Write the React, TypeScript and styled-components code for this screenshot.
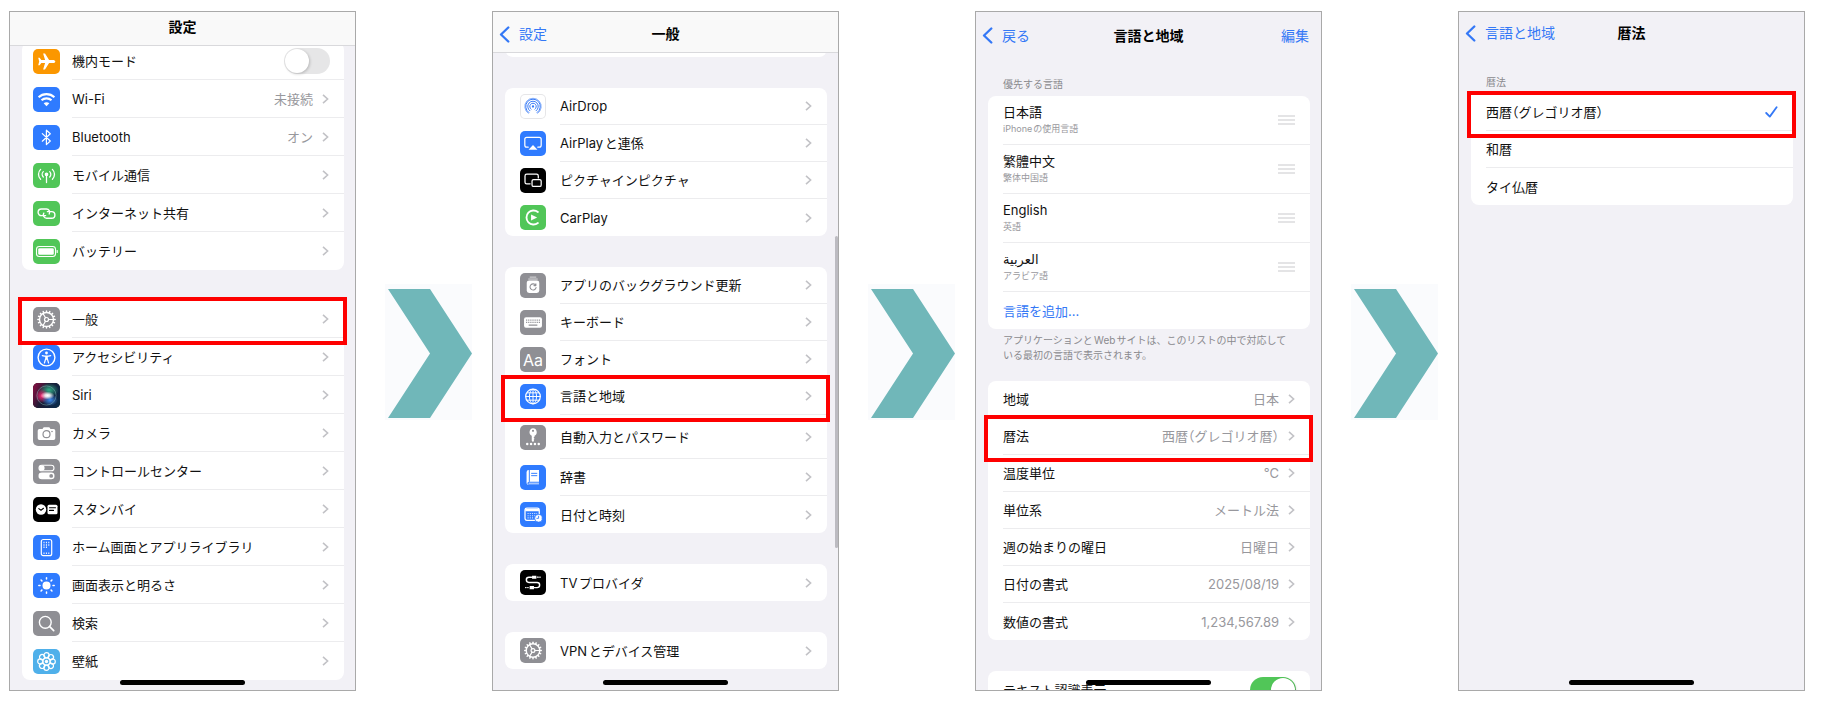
import React, { useState } from "react";
import styled, { createGlobalStyle, css } from "styled-components";

const BLUE = "#3478f6";
const ICON_BLUE = "#2f7bff";
const GREEN = "#51c658";
const GRAY = "#8f8f94";

const GlobalStyle = createGlobalStyle`
  *, *::before, *::after { box-sizing: border-box; }
  body {
    margin: 0;
    background: #fff;
    color: #111;
    font-family: Inter, "Noto Sans CJK JP", "DejaVu Sans", sans-serif;
    font-size: 13px;
    line-height: 18px;
    text-autospace: normal;
  }
`;

/* ---------- page ---------- */

const Guide = styled.main`
  display: grid;
  grid-template-columns:
    minmax(0, 347fr) minmax(0, 136fr) minmax(0, 347fr) minmax(0, 136fr)
    minmax(0, 347fr) minmax(0, 136fr) minmax(0, 347fr);
  align-items: center;
  padding: 11px 18px 12px 9px;
`;

const Screen = styled.section`
  position: relative;
  display: flex;
  flex-direction: column;
  aspect-ratio: 347 / 680;
  overflow: hidden;
  border: 1px solid #a9a9a9;
  background: #f2f1f6;
`;

const StepArrow = styled.svg`
  display: block;
  width: 64%;
  height: auto;
  margin: 2px 0 0 21%;
`;

const HomeIndicator = styled.div`
  position: absolute;
  left: 32%;
  bottom: 5px;
  z-index: 3;
  width: 36%;
  height: 5px;
  border-radius: 3px;
  background: #000;
`;

const ScrollThumb = styled.div`
  position: absolute;
  top: 33%;
  right: 0;
  width: 3px;
  height: 46%;
  border-radius: 2px;
  background: #bcbbc1;
`;

/* ---------- header ---------- */

const Bar = styled.header<{ $height: number; $raised?: boolean; $top?: number; $bottom?: number }>`
  position: relative;
  z-index: 2;
  flex: none;
  display: grid;
  grid-template-columns: 1fr auto 1fr;
  align-items: center;
  height: ${(p) => p.$height}px;
  padding: ${(p) => p.$top ?? 0}px 6px ${(p) => p.$bottom ?? 0}px;
  ${(p) =>
    p.$raised &&
    css`
      border-bottom: 1px solid #d9d9dc;
      background: #f9f9f9;
    `}
`;

const Title = styled.h2`
  grid-column: 2;
  margin: 0;
  font-size: 14px;
  font-weight: 700;
  line-height: 20px;
  color: #000;
`;

const BackLink = styled.a`
  grid-column: 1;
  justify-self: start;
  display: flex;
  align-items: center;
  gap: 9px;
  color: ${BLUE};
  font-size: 14px;
  line-height: 20px;
  text-decoration: none;
`;

const EditButton = styled.button`
  grid-column: 3;
  justify-self: end;
  padding: 0 6px 0 0;
  border: 0;
  background: none;
  color: ${BLUE};
  font: inherit;
  font-size: 14px;
  line-height: 20px;
`;

/* ---------- lists ---------- */

const Stack = styled.div<{ $gap: number; $top?: number }>`
  display: flex;
  flex-direction: column;
  gap: ${(p) => p.$gap}px;
  margin-top: ${(p) => p.$top ?? 0}px;
  padding: 0 11px 0 12px;
`;

const Group = styled.ul<{ $squareTop?: boolean; $pad?: number; $gap?: number }>`
  --pad: ${(p) => p.$pad ?? 15}px;
  --gap: ${(p) => p.$gap ?? 14}px;
  margin: 0;
  padding: 0;
  list-style: none;
  border-radius: ${(p) => (p.$squareTop ? "0 0 8px 8px" : "8px")};
  background: #fff;
`;

const GroupEnd = styled.div`
  height: 12px;
  border-radius: 0 0 8px 8px;
  background: #fff;
`;

const Item = styled.li<{ $height: number; $marked?: boolean }>`
  position: relative;
  height: ${(p) => p.$height}px;
  font-feature-settings: "halt";
  ${(p) =>
    p.$marked &&
    css`
      z-index: 1;
      &::after {
        content: "";
        position: absolute;
        inset: -3px -3px -7px -4px;
        border: 4px solid #fe0000;
        pointer-events: none;
      }
    `}
`;

const rowLayout = css`
  display: flex;
  align-items: center;
  gap: var(--gap);
  height: 100%;
  padding-left: var(--pad);
  color: inherit;
  text-decoration: none;
`;

const RowLink = styled.a`${rowLayout}`;
const RowLabel = styled.label`${rowLayout}`;
const RowBox = styled.div`${rowLayout}`;

const RowBody = styled.span`
  flex: 1;
  display: flex;
  align-items: center;
  gap: 9px;
  height: 100%;
  padding-right: 15px;
  border-bottom: 1px solid #ececee;
  white-space: nowrap;
  li:last-child & {
    border-bottom: 0;
  }
`;

const Name = styled.span`
  flex: 1;
`;

const Value = styled.span`
  color: #98989d;
`;

const Tile = styled.span<{ $bg: string; $width: number; $outlined?: boolean }>`
  flex: none;
  display: flex;
  align-items: center;
  justify-content: center;
  width: ${(p) => p.$width}px;
  height: 25px;
  overflow: hidden;
  border-radius: 5px;
  background: ${(p) => p.$bg};
  color: #fff;
  font-size: 16px;
  ${(p) => p.$outlined && "box-shadow: inset 0 0 0 1px #e6e6e8;"}
`;

const SectionLabel = styled.h3<{ $top: number }>`
  margin: ${(p) => p.$top}px 27px 4px;
  color: #8a8a8e;
  font-size: 10px;
  font-weight: 400;
  line-height: 15px;
`;

const Note = styled.p`
  margin: 4px 27px 18px;
  padding-right: 4px;
  color: #8a8a8e;
  font-size: 10px;
  line-height: 15px;
`;

const LanguageText = styled.span`
  flex: 1;
  display: flex;
  flex-direction: column;
`;

const LanguageNote = styled.small`
  color: #98989d;
  font-size: 9px;
  line-height: 16px;
`;

const HandleButton = styled.button`
  display: flex;
  padding: 0;
  border: 0;
  background: none;
`;

const AddButton = styled.button`
  width: 100%;
  height: 100%;
  padding: 0 15px;
  border: 0;
  background: none;
  color: ${BLUE};
  font: inherit;
  text-align: left;
`;

const Switch = styled.input`
  appearance: none;
  flex: none;
  width: 46px;
  height: 26px;
  margin: 0 -1px 0 0;
  padding: 1px;
  border-radius: 13px;
  background: #e6e6e7;
  &::before {
    content: "";
    display: block;
    width: 24px;
    height: 24px;
    border-radius: 50%;
    background: #fff;
    box-shadow: 1px 1px 3px rgba(0, 0, 0, 0.2);
  }
  &:checked {
    background: ${GREEN};
  }
  &:checked::before {
    margin-left: auto;
  }
`;

const HiddenRadio = styled.input`
  appearance: none;
  width: 0;
  height: 0;
  margin: 0;
  & + svg {
    visibility: hidden;
  }
  &:checked + svg {
    visibility: visible;
  }
`;

/* ---------- glyphs ---------- */

const Chevron = () => (
  <svg width="7" height="10" viewBox="0 0 7 10" fill="none" stroke="#c2c2c6" strokeWidth="1.6" aria-hidden="true">
    <path d="M1 0.8 5.6 5 1 9.2" />
  </svg>
);

const BackChevron = () => (
  <svg width="11" height="17" viewBox="0 0 11 17" fill="none" stroke={BLUE} strokeWidth="2.3" strokeLinecap="round" strokeLinejoin="round" aria-hidden="true">
    <path d="M9.3 1.5 2 8.5 9.3 15.5" />
  </svg>
);

const Check = () => (
  <svg width="13" height="12" viewBox="0 0 13 12" fill="none" stroke={BLUE} strokeWidth="1.8" strokeLinecap="round" strokeLinejoin="round" aria-hidden="true">
    <path d="M1.2 7 4.8 10.6 11.6 1.2" />
  </svg>
);

const DragLines = () => (
  <svg width="17" height="10" viewBox="0 0 17 10" stroke="#c9c9cc" strokeWidth="1" aria-hidden="true">
    <path d="M0 1h17M0 5h17M0 9h17" />
  </svg>
);

const Arrow = () => (
  <StepArrow viewBox="0 0 87 136" aria-hidden="true">
    <rect width="87" height="136" fill="#fafbfd" />
    <path d="M3 5h42l42 64.5L45 134H3l42-64.5z" fill="#70b7b9" />
  </StepArrow>
);

const Glyph = ({ children }: { children: React.ReactNode }) => (
  <svg width="27" height="25" viewBox="0 0 27 25" fill="none" stroke="#fff" strokeWidth="1.3" strokeLinecap="round" strokeLinejoin="round" aria-hidden="true">
    {children}
  </svg>
);

const around = (n: number) => Array.from({ length: n }, (_, i) => (360 / n) * i);

const gear = (
  <Glyph>
    <circle cx="13.5" cy="12.5" r="7" strokeWidth="1.4" />
    {around(16).map((a) => (
      <path key={a} d="M13.5 3.9v1.2" strokeWidth="1.5" transform={`rotate(${a} 13.5 12.5)`} />
    ))}
    <circle cx="13.5" cy="12.5" r="2" strokeWidth="1.2" />
    <path d="M15.5 12.5h5M12.5 10.8 10 6.5M12.5 14.2 10 18.5" strokeWidth="1.2" />
  </Glyph>
);

const glyphs: Record<string, React.ReactNode> = {
  gear,
  plane: (
    <Glyph>
      <path
        d="M22.3 12.5c0-1-1.3-1.5-2.6-1.5h-3.6L12 4.5h-1.9l2 6.5H8.3L6.6 8.8H5.2l1 3.7-1 3.7h1.4L8.3 14h3.8l-2 6.5H12l4.1-6.5h3.6c1.3 0 2.6-.5 2.6-1.5z"
        fill="#fff" stroke="none"
      />
    </Glyph>
  ),
  wifi: (
    <Glyph>
      <path d="M5.6 10.2c4.4-4.1 11.4-4.1 15.8 0M8.5 13.3c2.8-2.6 7.2-2.6 10 0" strokeWidth="2.1" strokeLinecap="butt" />
      <path d="M13.5 19.3l-2.8-3c1.5-1.4 4.1-1.4 5.6 0z" fill="#fff" stroke="none" />
    </Glyph>
  ),
  bluetooth: (
    <Glyph>
      <path d="M9.3 8.6l8 7.4-3.9 3.6V5.2l3.9 3.6-8 7.4" strokeWidth="1.2" />
    </Glyph>
  ),
  antenna: (
    <Glyph>
      <circle cx="13.5" cy="11.3" r="1.2" fill="#fff" />
      <path d="M13.5 12.5v7M10.3 14c-1.5-1.5-1.5-3.9 0-5.4M16.7 14c1.5-1.5 1.5-3.9 0-5.4M7.6 16.2c-2.8-2.8-2.8-7 0-9.8M19.4 16.2c2.8-2.8 2.8-7 0-9.8" />
    </Glyph>
  ),
  link: (
    <Glyph>
      <path d="M12.6 14.6h-4.2a3.3 3.3 0 0 1 0-6.6h5a3.3 3.3 0 0 1 2.8 5M14.4 10.6h4.2a3.3 3.3 0 0 1 0 6.6h-5a3.3 3.3 0 0 1-2.8-5" strokeWidth="1.4" />
    </Glyph>
  ),
  battery: (
    <Glyph>
      <rect x="3.5" y="7.5" width="19" height="10" rx="2.8" strokeWidth="1.1" />
      <rect x="5.2" y="9.2" width="15.6" height="6.6" rx="1.4" fill="#fff" stroke="none" />
      <path d="M24.2 11.5v2" strokeWidth="1.2" />
    </Glyph>
  ),
  accessibility: (
    <Glyph>
      <circle cx="13.5" cy="12.5" r="8.4" strokeWidth="1.4" />
      <circle cx="13.5" cy="8" r="1.4" fill="#fff" stroke="none" />
      <path d="M9.3 10.6c2.8.8 5.6.8 8.4 0M13.5 11.2v3M11.4 18l1.3-4.2h1.6l1.3 4.2M12.8 11.3v3M14.2 11.3v3" strokeWidth="1.2" />
    </Glyph>
  ),
  siri: (
    <svg width="27" height="25" viewBox="0 0 27 25" aria-hidden="true">
      <defs>
        <linearGradient id="siriBase" x1="0" y1="0.3" x2="1" y2="0.7">
          <stop offset="0" stopColor="#7a1040" />
          <stop offset="0.4" stopColor="#1c1b34" />
          <stop offset="1" stopColor="#0a2a4a" />
        </linearGradient>
        <radialGradient id="siriPink"><stop offset="0" stopColor="#ff2d78" /><stop offset="1" stopColor="#ff2d78" stopOpacity="0" /></radialGradient>
        <radialGradient id="siriBlue"><stop offset="0" stopColor="#3f8cf0" /><stop offset="1" stopColor="#3f8cf0" stopOpacity="0" /></radialGradient>
        <radialGradient id="siriGreen"><stop offset="0" stopColor="#2fae86" /><stop offset="1" stopColor="#2fae86" stopOpacity="0" /></radialGradient>
        <radialGradient id="siriWhite"><stop offset="0" stopColor="#fff" /><stop offset="0.35" stopColor="#fff" stopOpacity="0.85" /><stop offset="1" stopColor="#fff" stopOpacity="0" /></radialGradient>
      </defs>
      <rect width="27" height="25" fill="url(#siriBase)" />
      <ellipse cx="16" cy="7" rx="10" ry="7" fill="url(#siriGreen)" />
      <ellipse cx="9" cy="13" rx="7" ry="7" fill="url(#siriPink)" />
      <ellipse cx="17" cy="17" rx="8" ry="6" fill="url(#siriBlue)" />
      <ellipse cx="14.5" cy="12.5" rx="7" ry="4" fill="url(#siriWhite)" />
      <circle cx="13.5" cy="12.5" r="9.6" fill="none" stroke="#7fb3b8" strokeOpacity="0.6" strokeWidth="0.8" />
    </svg>
  ),
  camera: (
    <Glyph>
      <path d="M6.5 8h3l1.2-1.8h5.6L17.5 8h3a1.8 1.8 0 0 1 1.8 1.8v7.4a1.8 1.8 0 0 1-1.8 1.8h-14a1.8 1.8 0 0 1-1.8-1.8V9.8a1.8 1.8 0 0 1 1.8-1.8z" fill="#fff" stroke="none" />
      <circle cx="13.5" cy="13.2" r="3.5" stroke={GRAY} strokeWidth="1.2" />
      <circle cx="19" cy="10.5" r="0.8" fill={GRAY} stroke="none" />
    </Glyph>
  ),
  controls: (
    <Glyph>
      <rect x="6" y="6.2" width="15" height="5.6" rx="2.8" strokeWidth="1.1" />
      <circle cx="8.9" cy="9" r="2.7" fill="#fff" stroke="none" />
      <rect x="5.5" y="13.6" width="16" height="6.6" rx="3.3" fill="#fff" stroke="none" />
      <circle cx="18.2" cy="16.9" r="1.9" fill={GRAY} stroke="none" />
    </Glyph>
  ),
  standby: (
    <Glyph>
      <circle cx="8" cy="12.5" r="5.2" fill="#fff" stroke="none" />
      <path d="M5.8 11.6 8 13.3l2.5-2" stroke="#000" strokeWidth="1.1" />
      <rect x="14.5" y="7.8" width="10" height="9.4" rx="1.5" fill="#fff" stroke="none" />
      <path d="M16.5 10.8h6M16.5 13.4h4" stroke="#000" strokeWidth="1.1" />
    </Glyph>
  ),
  phone: (
    <Glyph>
      <rect x="8.3" y="4.5" width="10.4" height="16.2" rx="2" strokeWidth="1.2" />
      <path d="M10.5 7.5h6M10.5 10h6M10.5 12.3h3.5M10.5 18.2h6" strokeWidth="1.5" strokeDasharray="1 1.4" strokeLinecap="butt" />
    </Glyph>
  ),
  sun: (
    <Glyph>
      <circle cx="13.5" cy="12.5" r="4" fill="#fff" stroke="none" />
      {around(8).map((a) => (
        <path key={a} d="M13.5 4.8v1.2" strokeWidth="1.5" transform={`rotate(${a} 13.5 12.5)`} />
      ))}
    </Glyph>
  ),
  search: (
    <Glyph>
      <circle cx="12.3" cy="11.3" r="5.9" strokeWidth="1.4" />
      <path d="M16.7 15.7l4 4" strokeWidth="1.7" />
    </Glyph>
  ),
  flower: (
    <Glyph>
      {around(8).map((a) => (
        <circle key={a} cx="13.5" cy="6.3" r="2.6" strokeWidth="1.2" transform={`rotate(${a} 13.5 12.5)`} />
      ))}
      <circle cx="13.5" cy="12.5" r="3.6" strokeWidth="1.1" />
      <circle cx="13.5" cy="12.5" r="1.7" fill="#fff" stroke="none" />
    </Glyph>
  ),
  airdrop: (
    <Glyph>
      <g stroke={BLUE} strokeWidth="1">
        <circle cx="13.5" cy="12.5" r="1.2" fill={BLUE} stroke="none" />
        <path d="M11.5 15.3a3.4 3.4 0 1 1 4 0M10.300 17a5.500 5.500 0 1 1 6.400 0M9.200 18.800a7.600 7.600 0 1 1 8.600 0" />
        <path d="M8.700 19.700a8.600 8.600 0 1 1 9.600 0" strokeWidth="0.600" />
      </g>
    </Glyph>
  ),
  airplay: (
    <Glyph>
      <path d="M8.5 16.3H7a2 2 0 0 1-2-2V8.2a2 2 0 0 1 2-2h13a2 2 0 0 1 2 2v6.100a2 2 0 0 1-2 2h-1.500" />
      <path d="M13.5 14l4.6 5H8.9z" fill="#fff" stroke="none" />
    </Glyph>
  ),
  pip: (
    <Glyph>
      <path d="M10.5 16H7a1.8 1.8 0 0 1-1.8-1.8V7.8A1.8 1.8 0 0 1 7 6h10.2A1.8 1.8 0 0 1 19 7.8v2" />
      <rect x="12.5" y="11.5" width="9.5" height="7.2" rx="1.6" />
    </Glyph>
  ),
  carplay: (
    <Glyph>
      <path d="M18.6 6.8a7.3 7.3 0 1 0 0 11.4" strokeWidth="1.9" />
      <path d="M11.5 9.3l6.3 3.2-6.3 3.2z" fill="#fff" stroke="none" />
    </Glyph>
  ),
  refresh: (
    <Glyph>
      <path d="M10.5 3.8h6M9 5.8h9" strokeWidth="1" strokeOpacity="0.7" />
      <rect x="7" y="7.2" width="13" height="13" rx="2.5" fill="#fff" stroke="none" />
      <path d="M16.3 12.3a3.2 3.2 0 1 0 .4 2.4M16.5 10.6v2h-2" stroke={GRAY} strokeWidth="1.1" />
    </Glyph>
  ),
  keyboard: (
    <Glyph>
      <rect x="4.2" y="7" width="18.6" height="11" rx="2" fill="#fff" stroke="none" />
      <g stroke={GRAY} strokeLinecap="butt">
        <path d="M6.3 10h14.6M6.3 12.3h14.6" strokeWidth="1.3" strokeDasharray="1.2 1" />
        <path d="M9 15.2h9" strokeWidth="1.2" />
      </g>
    </Glyph>
  ),
  globe: (
    <Glyph>
      <circle cx="13.5" cy="12.5" r="7.6" />
      <ellipse cx="13.5" cy="12.5" rx="3.7" ry="7.6" strokeWidth="1" />
      <path d="M13.5 5v15M6 12.5h15M7.4 8.7h12.2M7.4 16.3h12.2" strokeWidth="1" />
    </Glyph>
  ),
  key: (
    <Glyph>
      <path d="M13.500 3a4 4 0 0 1 1.600 7.600v1.200l-1 1 1 1-1 1.200.6.800-1.200 1.300-1.300-1.300v-5.200a4 4 0 0 1 1.300-7.600z" fill="#fff" stroke="none" />
      <circle cx="13.5" cy="5.6" r="1.1" fill={GRAY} stroke="none" />
      {[7.5, 11.5, 15.5, 19.5].map((x) => (
        <circle key={x} cx={x} cy="19.3" r="1.3" fill="#fff" stroke="none" />
      ))}
    </Glyph>
  ),
  book: (
    <Glyph>
      <path d="M9 4.8h10.7v12H9.3a1.6 1.6 0 0 0 0 3.2h10.4v.4H9a2.2 2.2 0 0 1-2.2-2.2V7A2.2 2.2 0 0 1 9 4.8z" fill="#fff" stroke="none" />
      <path d="M9.3 18.4h10" strokeWidth="0.9" />
      <path d="M9.7 5v11.6M12 8.2h5.5M12 10.6h5.5" stroke={ICON_BLUE} strokeWidth="1" />
    </Glyph>
  ),
  calendar: (
    <Glyph>
      <rect x="5.2" y="6" width="14.8" height="12.5" rx="2" />
      <path d="M5.5 8h14.2" strokeWidth="2.2" strokeLinecap="butt" />
      <path d="M7.8 11.5h10M7.8 13.8h10M7.8 16h7" strokeWidth="1.1" strokeDasharray="1.2 1.1" strokeLinecap="butt" strokeOpacity="0.75" />
      <circle cx="19.2" cy="16.4" r="4" fill="#fff" stroke={ICON_BLUE} strokeWidth="0.8" />
      <path d="M19.3 14.3v2.2h-1.8" stroke={ICON_BLUE} strokeWidth="0.9" />
    </Glyph>
  ),
  cable: (
    <Glyph>
      <path d="M12 7H9.3a2.7 2.7 0 0 0 0 5.4h8.4a2.7 2.7 0 0 1 0 5.4H15" strokeWidth="1.5" />
      <path d="M12.5 7h4.5M10 17.8h4.5" strokeWidth="3.2" strokeLinecap="butt" />
      <path d="M18 7h1M20.5 7h.5M8.5 17.8H8M6.3 17.8h-.5" strokeWidth="1.3" />
    </Glyph>
  ),
  fonts: "Aa",
};

/* ---------- rows ---------- */

type Entry = {
  name: string;
  icon?: string;
  bg?: string;
  value?: string;
  marked?: boolean;
  tall?: boolean;
};

const LinkRow = ({ entry, height, tile = 26 }: { entry: Entry; height: number; tile?: number }) => (
  <Item $height={entry.tall ? height + 7 : height} $marked={entry.marked}>
    <RowLink href="#">
      {entry.icon && (
        <Tile $bg={entry.bg ?? GRAY} $width={tile} $outlined={entry.bg === "#fff"}>
          {glyphs[entry.icon]}
        </Tile>
      )}
      <RowBody>
        <Name>{entry.name}</Name>
        {entry.value && <Value>{entry.value}</Value>}
        <Chevron />
      </RowBody>
    </RowLink>
  </Item>
);

const connections: Entry[] = [
  { name: "Wi-Fi", icon: "wifi", bg: ICON_BLUE, value: "未接続" },
  { name: "Bluetooth", icon: "bluetooth", bg: ICON_BLUE, value: "オン" },
  { name: "モバイル通信", icon: "antenna", bg: GREEN },
  { name: "インターネット共有", icon: "link", bg: GREEN },
  { name: "バッテリー", icon: "battery", bg: GREEN },
];

const device: Entry[] = [
  { name: "一般", icon: "gear", marked: true },
  { name: "アクセシビリティ", icon: "accessibility", bg: ICON_BLUE },
  { name: "Siri", icon: "siri", bg: "#111" },
  { name: "カメラ", icon: "camera" },
  { name: "コントロールセンター", icon: "controls" },
  { name: "スタンバイ", icon: "standby", bg: "#000" },
  { name: "ホーム画面とアプリライブラリ", icon: "phone", bg: ICON_BLUE },
  { name: "画面表示と明るさ", icon: "sun", bg: ICON_BLUE },
  { name: "検索", icon: "search" },
  { name: "壁紙", icon: "flower", bg: "#4fb0ea" },
];

const general: Entry[][] = [
  [
    { name: "AirDrop", icon: "airdrop", bg: "#fff" },
    { name: "AirPlayと連係", icon: "airplay", bg: ICON_BLUE },
    { name: "ピクチャインピクチャ", icon: "pip", bg: "#000" },
    { name: "CarPlay", icon: "carplay", bg: GREEN },
  ],
  [
    { name: "アプリのバックグラウンド更新", icon: "refresh" },
    { name: "キーボード", icon: "keyboard" },
    { name: "フォント", icon: "fonts" },
    { name: "言語と地域", icon: "globe", bg: ICON_BLUE, marked: true },
    { name: "自動入力とパスワード", icon: "key", tall: true },
    { name: "辞書", icon: "book", bg: ICON_BLUE },
    { name: "日付と時刻", icon: "calendar", bg: ICON_BLUE },
  ],
  [{ name: "TVプロバイダ", icon: "cable", bg: "#000" }],
  [{ name: "VPNとデバイス管理", icon: "gear" }],
];

const languages = [
  ["日本語", "iPhoneの使用言語", "ja"],
  ["繁體中文", "繁体中国語", "zh-Hant"],
  ["English", "英語", "en"],
  ["العربية", "アラビア語", "ar"],
];

const formats: Entry[] = [
  { name: "地域", value: "日本" },
  { name: "暦法", value: "西暦（グレゴリオ暦）", marked: true },
  { name: "温度単位", value: "°C" },
  { name: "単位系", value: "メートル法" },
  { name: "週の始まりの曜日", value: "日曜日" },
  { name: "日付の書式", value: "2025/08/19" },
  { name: "数値の書式", value: "1,234,567.89" },
];

const calendars = ["西暦（グレゴリオ暦）", "和暦", "タイ仏暦"];

/* ---------- screens ---------- */

const SettingsScreen = () => {
  const [airplane, setAirplane] = useState(false);
  return (
    <Screen>
      <Bar $height={34} $bottom={4} $raised>
        <Title>設定</Title>
      </Bar>
      <Stack $gap={30} $top={-4}>
        <Group $pad={11} $gap={12}>
          <Item $height={38}>
            <RowLabel>
              <Tile $bg="#fb9700" $width={27}>{glyphs.plane}</Tile>
              <RowBody>
                <Name>機内モード</Name>
                <Switch type="checkbox" role="switch" checked={airplane} onChange={(e) => setAirplane(e.target.checked)} />
              </RowBody>
            </RowLabel>
          </Item>
          {connections.map((e) => <LinkRow key={e.name} entry={e} height={38} tile={27} />)}
        </Group>
        <Group $pad={11} $gap={12} $squareTop>
          {device.map((e) => <LinkRow key={e.name} entry={e} height={38} tile={27} />)}
        </Group>
      </Stack>
      <HomeIndicator />
    </Screen>
  );
};

const GeneralScreen = () => (
  <Screen>
    <Bar $height={41} $top={4} $raised>
      <BackLink href="#"><BackChevron />設定</BackLink>
      <Title>一般</Title>
    </Bar>
    <Stack $gap={31} $top={-8}>
      <GroupEnd />
      {general.map((rows) => (
        <Group key={rows[0].name}>
          {rows.map((e) => <LinkRow key={e.name} entry={e} height={37} />)}
        </Group>
      ))}
    </Stack>
    <ScrollThumb />
    <HomeIndicator />
  </Screen>
);

const LanguageScreen = () => {
  const [liveText, setLiveText] = useState(true);
  return (
    <Screen>
      <Bar $height={47}>
        <BackLink href="#"><BackChevron />戻る</BackLink>
        <Title>言語と地域</Title>
        <EditButton type="button">編集</EditButton>
      </Bar>
      <SectionLabel $top={18}>優先する言語</SectionLabel>
      <Stack $gap={31}>
        <Group>
          {languages.map(([name, note, lang]) => (
            <Item key={lang} $height={49}>
              <RowBox>
                <RowBody>
                  <LanguageText>
                    <span lang={lang}>{name}</span>
                    <LanguageNote>{note}</LanguageNote>
                  </LanguageText>
                  <HandleButton type="button" aria-label={name}><DragLines /></HandleButton>
                </RowBody>
              </RowBox>
            </Item>
          ))}
          <Item $height={37}>
            <AddButton type="button">言語を追加...</AddButton>
          </Item>
        </Group>
      </Stack>
      <Note>アプリケーションとWebサイトは、このリストの中で対応している最初の言語で表示されます。</Note>
      <Stack $gap={31}>
        <Group>
          {formats.map((e) => <LinkRow key={e.name} entry={e} height={37} />)}
        </Group>
        <Group>
          <Item $height={37}>
            <RowLabel>
              <RowBody>
                <Name>テキスト認識表示</Name>
                <Switch type="checkbox" role="switch" checked={liveText} onChange={(e) => setLiveText(e.target.checked)} />
              </RowBody>
            </RowLabel>
          </Item>
        </Group>
      </Stack>
      <HomeIndicator />
    </Screen>
  );
};

const CalendarScreen = () => {
  const [selected, setSelected] = useState(calendars[0]);
  return (
    <Screen>
      <Bar $height={42}>
        <BackLink href="#"><BackChevron />言語と地域</BackLink>
        <Title>暦法</Title>
      </Bar>
      <SectionLabel $top={21}>暦法</SectionLabel>
      <Stack $gap={31}>
        <Group $squareTop>
          {calendars.map((name, i) => (
            <Item key={name} $height={37} $marked={i === 0}>
              <RowLabel>
                <RowBody>
                  <Name>{name}</Name>
                  <HiddenRadio type="radio" name="calendar" checked={selected === name} onChange={() => setSelected(name)} />
                  <Check />
                </RowBody>
              </RowLabel>
            </Item>
          ))}
        </Group>
      </Stack>
      <HomeIndicator />
    </Screen>
  );
};

export default function App() {
  return (
    <>
      <GlobalStyle />
      <Guide lang="ja">
        <SettingsScreen />
        <Arrow />
        <GeneralScreen />
        <Arrow />
        <LanguageScreen />
        <Arrow />
        <CalendarScreen />
      </Guide>
    </>
  );
}
